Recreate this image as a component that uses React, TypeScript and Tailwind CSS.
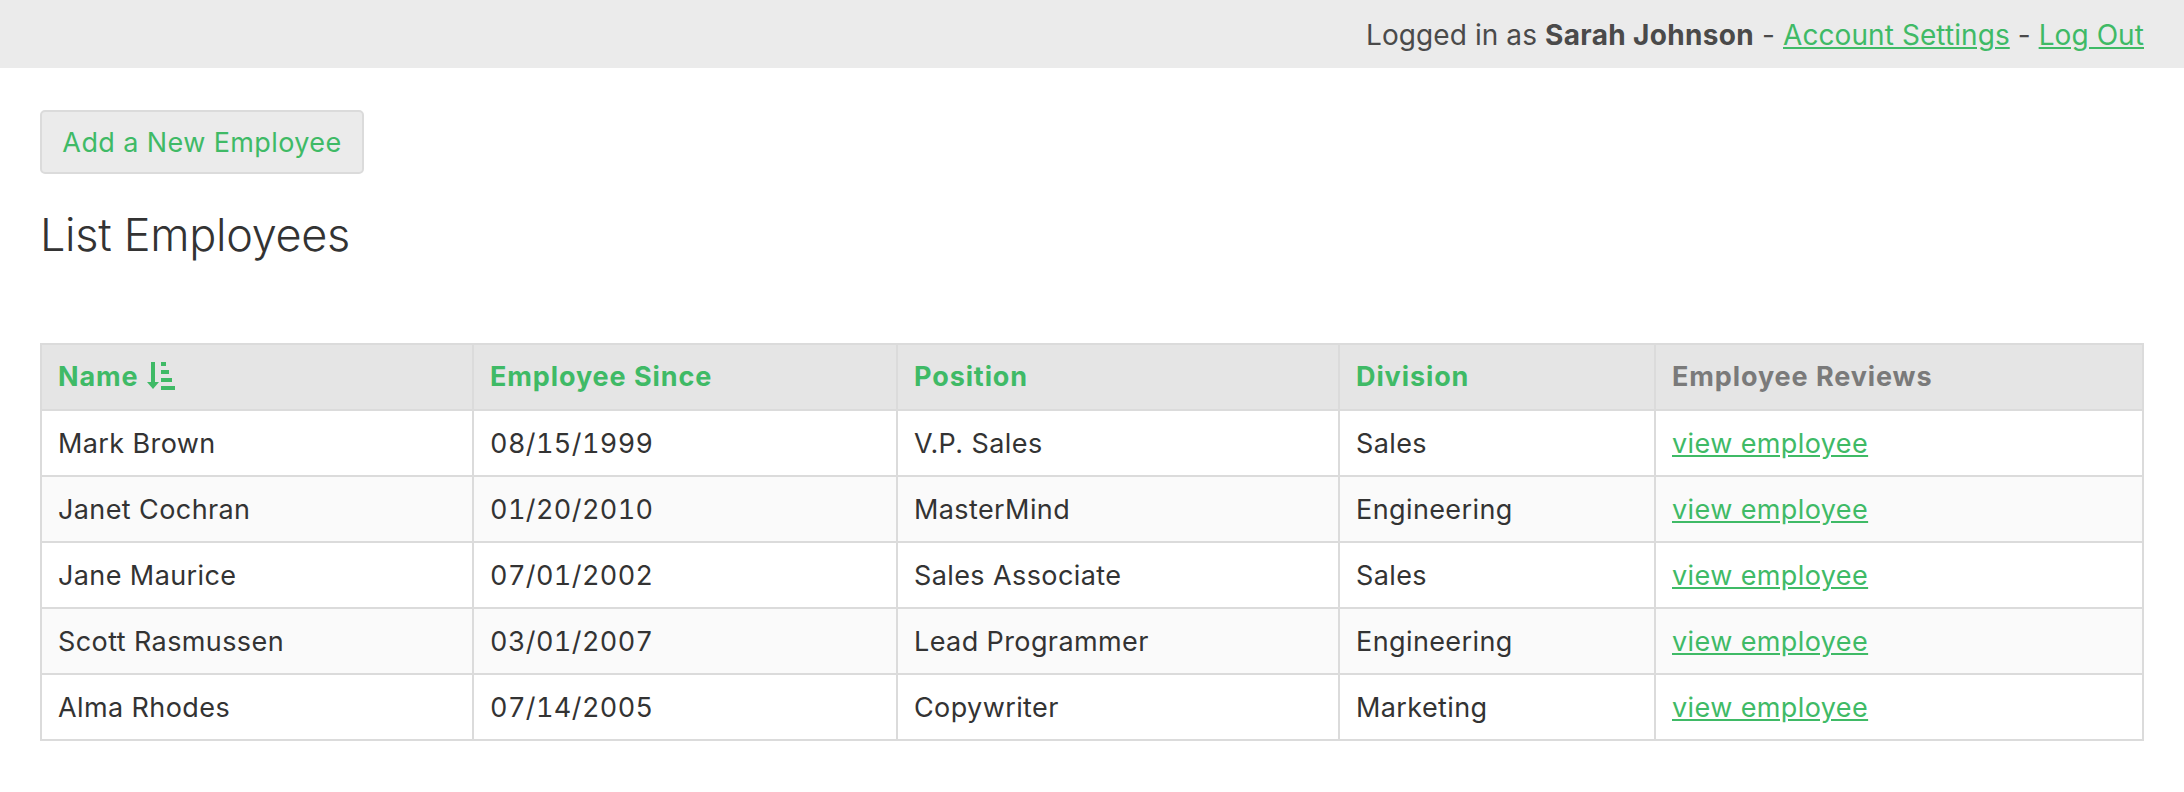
const rows = [
  ["Mark Brown", "08/15/1999", "V.P. Sales", "Sales"],
  ["Janet Cochran", "01/20/2010", "MasterMind", "Engineering"],
  ["Jane Maurice", "07/01/2002", "Sales Associate", "Sales"],
  ["Scott Rasmussen", "03/01/2007", "Lead Programmer", "Engineering"],
  ["Alma Rhodes", "07/14/2005", "Copywriter", "Marketing"],
];

const widths = ["w-[432px]", "w-[424px]", "w-[442px]", "w-[316px]", ""];

function SortIcon() {
  return (
    <svg width="28" height="28" viewBox="0 0 28 28" className="inline-block align-[-4px] ml-[8px] fill-[#3fba66]">
      <rect x="4" y="0" width="4" height="23" />
      <path d="M0 20 H12 L6 27 Z" />
      <rect x="14" y="0" width="5" height="4" />
      <rect x="14" y="8" width="8" height="4" />
      <rect x="14" y="16" width="11" height="4" />
      <rect x="14" y="24" width="14" height="4" />
    </svg>
  );
}

export default function App() {
  const cell = "border-2 border-[#dbdbdb] pl-4 pr-4 h-[66px] text-left align-middle";
  const td = `${cell} pt-[2px] pb-0`;
  const th = `${cell} pt-[1px] pb-0`;
  return (
    <div className="min-h-[792px] bg-white font-['Inter','Liberation_Sans',sans-serif] text-[27px] tracking-[0.4px] text-[#333333]">
      <div className="flex h-[68px] items-center justify-end bg-[#ebebeb] pr-[40px] pt-[2px] text-[28px] tracking-[0.08px] text-[#4a4a4a]">
        <span>
          Logged in as <b className="font-bold tracking-[0.35px]">Sarah Johnson</b> -{" "}
          <a className="text-[#3fba66] underline">Account Settings</a> -{" "}
          <a className="text-[#3fba66] underline">Log Out</a>
        </span>
      </div>
      <div className="pl-10 pr-[40px] pt-[42px]">
        <button className="flex h-[64px] w-[324px] items-center justify-center rounded-[5px] border-2 border-[#dbdbdb] bg-[#ebebeb] pt-[2px] text-[#3fba66]">
          Add a New Employee
        </button>
        <h1 className="mt-[33px] text-[45px] leading-[56px] font-light tracking-[-0.3px] text-[#333333]">List Employees</h1>
        <table className="mt-[80px] w-[2104px] table-fixed border-collapse">
          <thead>
            <tr className="bg-[#e5e5e5] font-bold tracking-[0.9px] text-[#3fba66]">
              <th className={`${th} ${widths[0]}`}>
                Name
                <SortIcon />
              </th>
              <th className={`${th} ${widths[1]}`}>Employee Since</th>
              <th className={`${th} ${widths[2]}`}>Position</th>
              <th className={`${th} ${widths[3]}`}>Division</th>
              <th className={`${th} text-[#7a7a7a]`}>Employee Reviews</th>
            </tr>
          </thead>
          <tbody>
            {rows.map((r, i) => (
              <tr key={r[0]} className={i % 2 === 1 ? "bg-[#fafafa]" : "bg-white"}>
                {r.map((c, j) => (
                  <td key={c} className={j === 1 ? `${td} tabular-nums` : td}>
                    {c}
                  </td>
                ))}
                <td className={td}>
                  <a className="text-[#3fba66] underline">view employee</a>
                </td>
              </tr>
            ))}
          </tbody>
        </table>
      </div>
    </div>
  );
}
